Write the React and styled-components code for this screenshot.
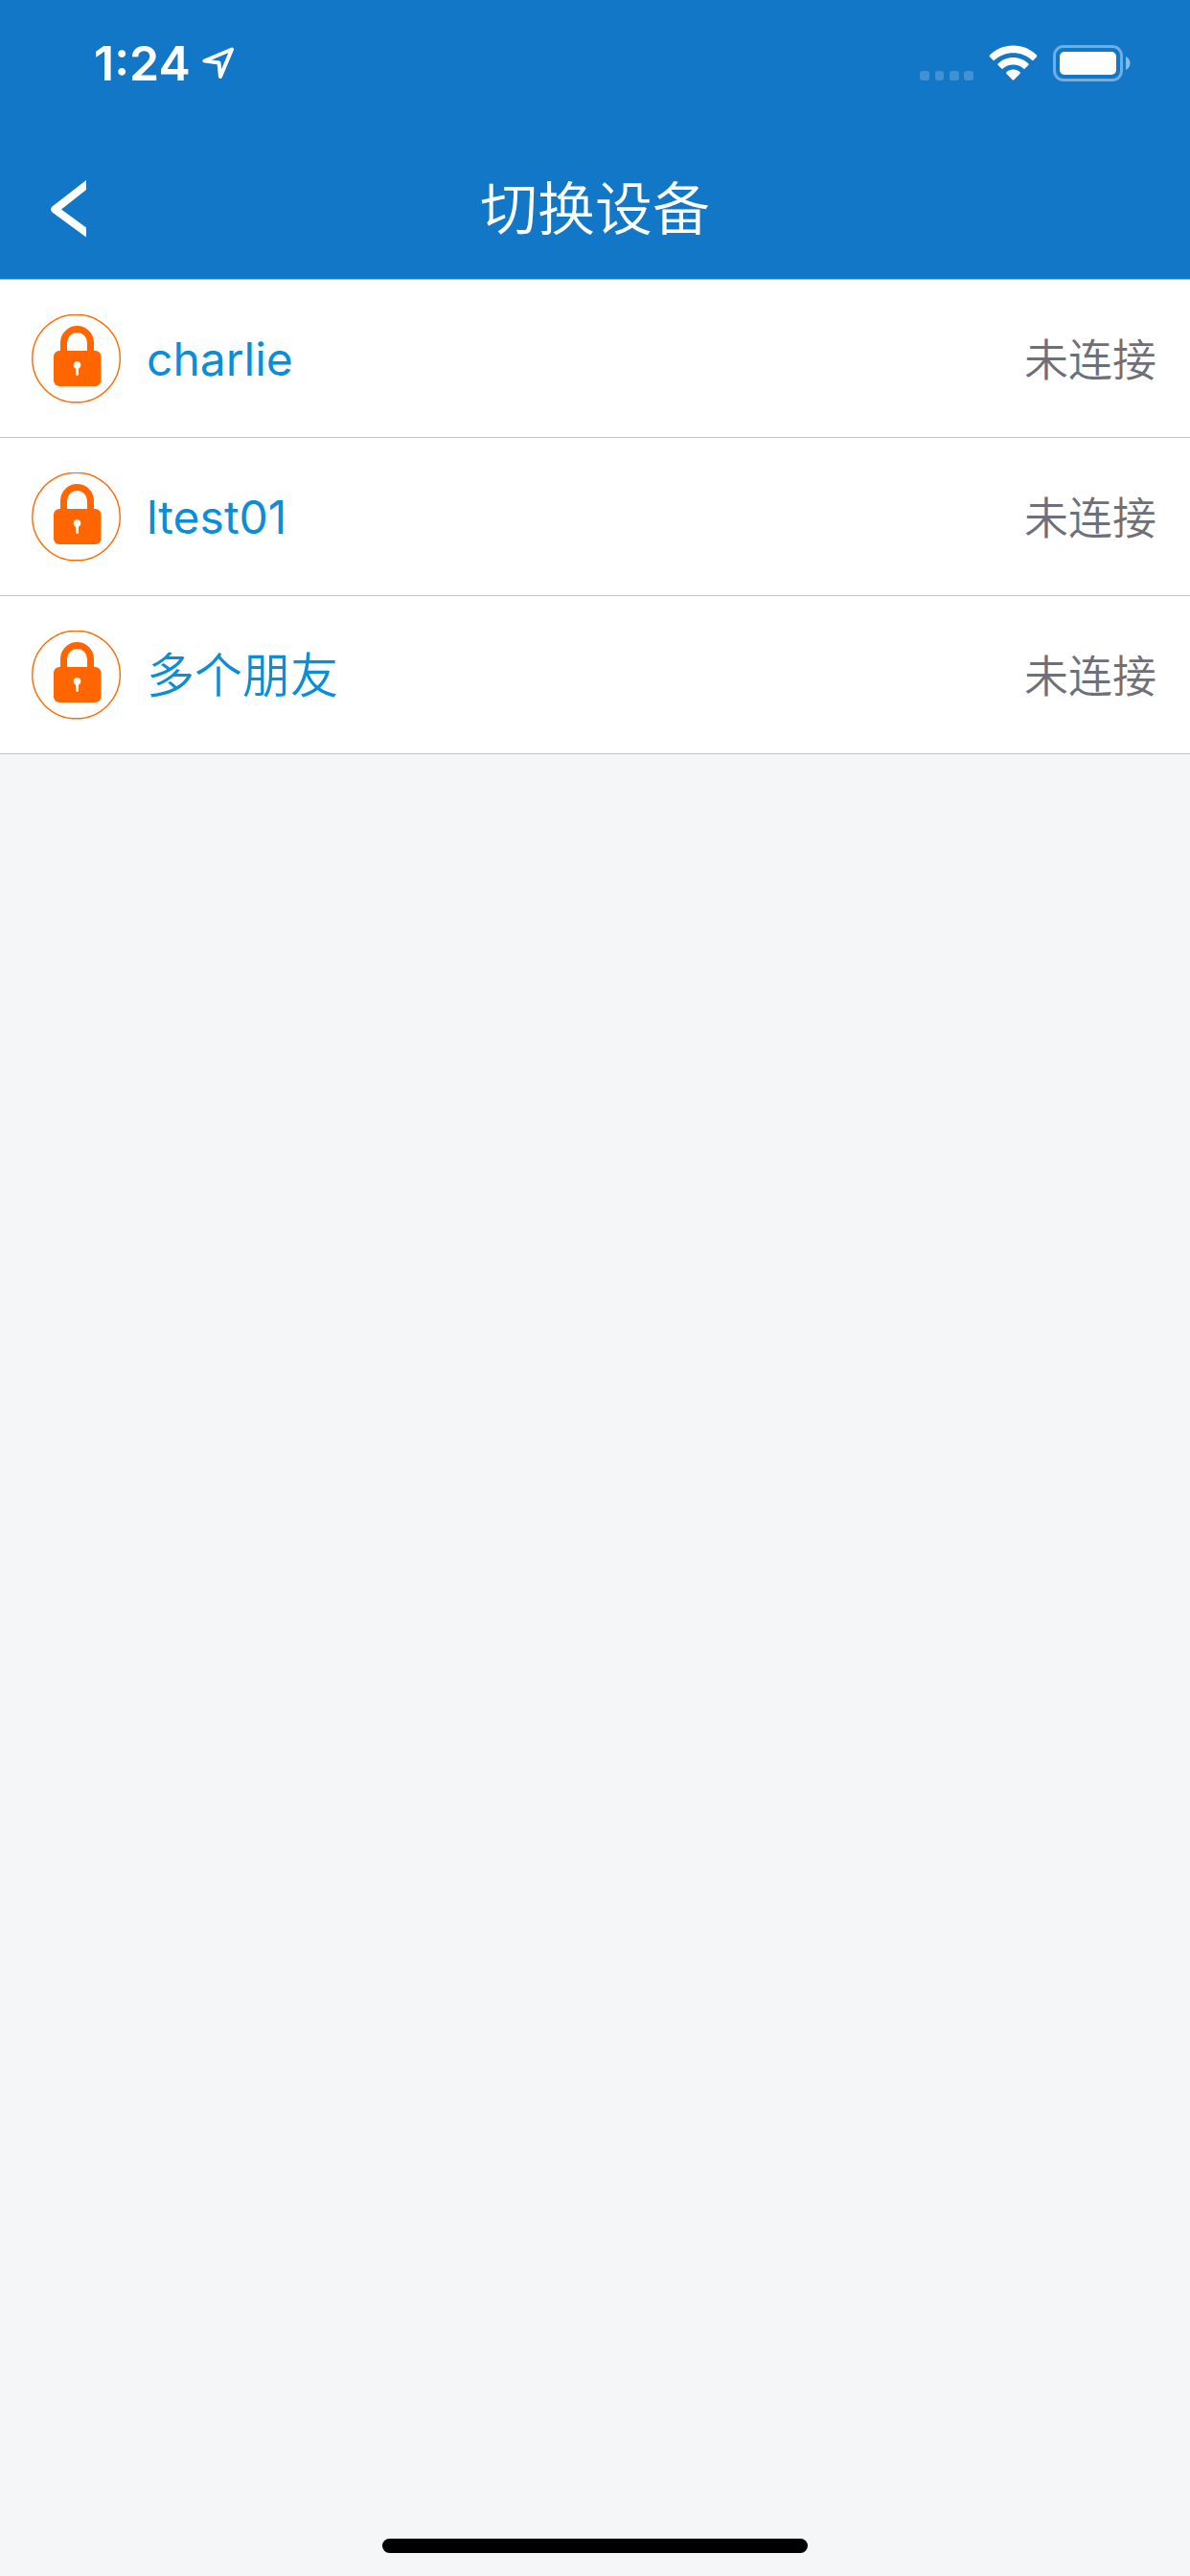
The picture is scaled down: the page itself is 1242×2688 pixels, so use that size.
import React from 'react';
import styled, { createGlobalStyle } from 'styled-components';

const devices = [
    { id: 1, name: 'charlie', lang: 'en', status: '未连接' },
    { id: 2, name: 'ltest01', lang: 'en', status: '未连接' },
    { id: 3, name: '多个朋友', lang: 'zh', status: '未连接' },
];

function App()
{
    return(
        <Screen>
            <GlobalStyle />
            <Header>
                <StatusBar>
                    <Clock>
                        <time>1:24</time>
                        <LocationIcon />
                    </Clock>
                    <Indicators>
                        <SignalIcon />
                        <WifiIcon />
                        <BatteryIcon />
                    </Indicators>
                </StatusBar>
                <NavBar>
                    <BackButton type="button" aria-label="返回">
                        <BackIcon />
                    </BackButton>
                    <Title>切换设备</Title>
                </NavBar>
            </Header>
            <DeviceList>
                {devices.map((device) => (
                    <li key={device.id}>
                        <DeviceRow type="button">
                            <LockIcon />
                            <DeviceName lang={device.lang}>{device.name}</DeviceName>
                            <DeviceStatus>{device.status}</DeviceStatus>
                        </DeviceRow>
                    </li>
                ))}
            </DeviceList>
            <Footer>
                <HomeIndicator />
            </Footer>
        </Screen>
    );
}

function LocationIcon()
{
    return(
        <svg width="34" height="34" viewBox="0 0 34 34" fill="none" aria-hidden="true">
            <path d="M2.5 14.5 L31 2.5 L19 31 L17.5 16.5 Z" stroke="#fff" strokeWidth="4" strokeLinejoin="round" />
        </svg>
    );
}

function SignalIcon()
{
    return(
        <svg width="56" height="38" viewBox="0 0 56 38" fill="#fff" fillOpacity="0.2" aria-hidden="true">
            <rect x="0" y="27" width="10" height="10" rx="3" />
            <rect x="16" y="27" width="9" height="10" rx="3" />
            <rect x="31" y="27" width="10" height="10" rx="3" />
            <rect x="46" y="27" width="10" height="10" rx="3" />
        </svg>
    );
}

function WifiIcon()
{
    return(
        <svg width="51" height="38" viewBox="0 0 51 38" fill="#fff" aria-hidden="true">
            <path d="M25.5 0.5 C35 0.5 43.5 4 50 10.5 Q50.9 11.4 50 12.3 L46.6 15.8 Q45.8 16.5 45 15.8 C39.6 10.8 32.8 8.2 25.5 8.2 C18.2 8.2 11.4 10.8 6 15.8 Q5.2 16.5 4.4 15.8 L1 12.3 Q0.1 11.4 1 10.5 C7.5 4 16 0.5 25.5 0.5 Z" />
            <path d="M25.5 13 C31.6 13 37.2 15.3 41.3 19.3 Q42.2 20.2 41.3 21.1 L37.8 24.6 Q37 25.3 36.2 24.6 C33.3 22 29.6 20.6 25.5 20.6 C21.4 20.6 17.7 22 14.8 24.6 Q14 25.3 13.2 24.6 L9.7 21.1 Q8.8 20.2 9.7 19.3 C13.8 15.3 19.4 13 25.5 13 Z" />
            <path d="M25.5 25.6 C28.2 25.6 30.7 26.6 32.5 28.2 Q33.4 29 32.5 29.9 L26.3 36.3 Q25.5 37 24.7 36.3 L18.5 29.9 Q17.6 29 18.5 28.2 C20.3 26.6 22.8 25.6 25.5 25.6 Z" />
        </svg>
    );
}

function BatteryIcon()
{
    return(
        <svg width="82" height="38" viewBox="0 0 82 38" fill="none" aria-hidden="true">
            <rect x="1.5" y="1.5" width="70" height="35" rx="9.5" stroke="#fff" strokeOpacity="0.4" strokeWidth="3" />
            <rect x="7" y="7" width="59" height="24" rx="5" fill="#fff" />
            <path d="M76 12 C82 14.5 82 23.5 76 26 Z" fill="#fff" fillOpacity="0.5" />
        </svg>
    );
}

function BackIcon()
{
    return(
        <svg width="37" height="60" viewBox="0 0 37 60" fill="#fff" aria-hidden="true">
            <path d="M37 0 V10 L11 30.5 L37 49.5 V59.5 L1.5 33.5 Q-1.5 30.5 1.5 27.5 Z" />
        </svg>
    );
}

function LockIcon()
{
    return(
        <svg width="94" height="94" viewBox="0 0 94 94" fill="none" aria-hidden="true">
            <circle cx="46.5" cy="46" r="45.8" stroke="#ff6a00" strokeWidth="1.4" />
            <path d="M33.5 42 V29.5 A14 14 0 0 1 61.5 29.5 V42" stroke="#ff6600" strokeWidth="7" />
            <rect x="23" y="38" width="49.5" height="37" rx="6" fill="#ff6600" />
            <circle cx="47.5" cy="53" r="3.8" fill="#fff" />
            <rect x="46" y="54" width="3" height="10" rx="1.5" fill="#fff" />
        </svg>
    );
}

export default App;

const GlobalStyle = createGlobalStyle`
    *
    {
        box-sizing: border-box;
    }

    body
    {
        margin: 0;
        background: #f4f6f8;
        font-family: Inter, "Noto Sans CJK SC", sans-serif;
    }

    button
    {
        margin: 0;
        padding: 0;
        border: 0;
        font: inherit;
        cursor: pointer;
    }

    svg
    {
        display: block;
        flex: none;
    }
`

const Screen = styled.div`
    display: flex;
    flex-direction: column;
    min-height: 100vh;
`

const Header = styled.header`
    background: #1377c8;
    border-bottom: 1px solid #b2b8be;
    color: #fff;
`

const StatusBar = styled.div`
    display: flex;
    align-items: center;
    justify-content: space-between;
    height: 132px;
    padding: 0 61px 0 98px;
`

const Clock = styled.div`
    display: flex;
    align-items: center;
    gap: 12px;
    font-size: 50px;
    font-weight: 600;
    line-height: 60px;
`

const Indicators = styled.div`
    display: flex;
    align-items: center;
    gap: 16px;
`

const NavBar = styled.div`
    display: grid;
    grid-template-columns: 1fr auto 1fr;
    align-items: center;
    height: 159px;
    padding-top: 12px;
`

const BackButton = styled.button`
    justify-self: start;
    padding: 20px 53px;
    background: none;
    color: inherit;
`

const Title = styled.h1`
    margin: 0;
    font-size: 60px;
    font-weight: 350;
    line-height: 84px;
`

const DeviceList = styled.ul`
    margin: 0;
    padding: 0;
    list-style: none;
`

const DeviceRow = styled.button`
    display: flex;
    align-items: center;
    width: 100%;
    height: 165px;
    padding: 2px 35px 0 33px;
    background: #fff;
    border-bottom: 1px solid #c4c4c6;
    text-align: left;
`

const DeviceName = styled.span`
    flex: 1;
    margin-left: 26px;
    color: #0c8ed6;
    font-size: 48px;
    line-height: 64px;

    &:lang(zh)
    {
        font-size: 50px;
        font-weight: 350;
    }
`

const DeviceStatus = styled.span`
    color: #6e7079;
    font-size: 46px;
    font-weight: 350;
    line-height: 64px;
`

const Footer = styled.footer`
    display: flex;
    justify-content: center;
    margin-top: auto;
    padding-bottom: 24px;
`

const HomeIndicator = styled.div`
    width: 444px;
    height: 15px;
    border-radius: 8px;
    background: #000;
`
